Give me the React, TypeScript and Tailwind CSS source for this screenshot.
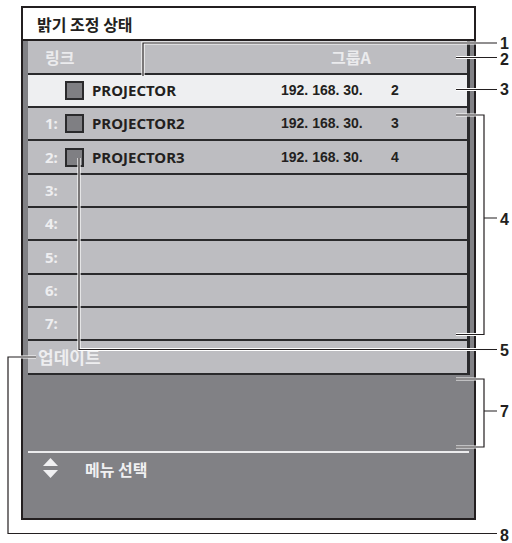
const KR = "font-['Noto_Sans_CJK_KR','Noto_Sans',sans-serif]";

type Row = {
  idx: string;
  name?: string;
  ip?: string;
  h: string;
  selected?: boolean;
};

const rows: Row[] = [
  { idx: '', name: 'PROJECTOR', ip: '2', h: 'h-[33px]', selected: true },
  { idx: '1:', name: 'PROJECTOR2', ip: '3', h: 'h-[33px]' },
  { idx: '2:', name: 'PROJECTOR3', ip: '4', h: 'h-[34px]' },
  { idx: '3:', h: 'h-[33px]' },
  { idx: '4:', h: 'h-[33px]' },
  { idx: '5:', h: 'h-[34px]' },
  { idx: '6:', h: 'h-[33px]' },
  { idx: '7:', h: 'h-[33px]' },
];

// callout leader lines, drawn over the screen
const leaders = [
  'M143 76V43H497',
  'M456 57.5H497',
  'M456 89.5H497',
  'M456 115H484V334.5H456M484 218H497',
  'M79 158V349.5H497',
  'M456 379H484V447H456M484 411H497',
  'M36 357H8V533.5H497',
];

const marks = [
  { n: '1', y: 43 },
  { n: '2', y: 59.5 },
  { n: '3', y: 89 },
  { n: '4', y: 219 },
  { n: '5', y: 350 },
  { n: '7', y: 411 },
  { n: '8', y: 535 },
];

function Callouts() {
  return (
    <svg className="absolute left-0 top-0 pointer-events-none" width="512" height="543" viewBox="0 0 512 543">
      {leaders.map((d) => (
        <path key={'w' + d} d={d} fill="none" stroke="#ffffff" strokeWidth="3.2" />
      ))}
      {leaders.map((d) => (
        <path key={'k' + d} d={d} fill="none" stroke="#231f20" strokeWidth="1.2" />
      ))}
      {marks.map((m) => (
        <text
          key={m.n}
          x="500"
          y={m.y}
          dominantBaseline="central"
          fontFamily="'Liberation Sans', Arial, sans-serif"
          fontWeight="700"
          fontSize="16"
          fill="#231f20"
        >
          {m.n}
        </text>
      ))}
    </svg>
  );
}

function ListRow({ row }: { row: Row }) {
  return (
    <div
      className={`${row.h} flex items-center border-b-2 border-r-[3px] border-[#2a2a2c] ${
        row.selected ? 'bg-[#eeeff1]' : 'bg-[#bdbdc1]'
      }`}
    >
      <div className="w-[37px] pl-[17px] text-[15px] font-bold text-[#eeeef0] font-['Noto_Sans',sans-serif]">{row.idx}</div>
      {row.name && (
        <>
          <div className="w-[19px] h-[19px] border-2 border-[#2a2a2c] bg-[#7f7f83]" />
          <div className="w-[197px] pl-[8px] text-[15px] font-bold text-[#231f20] font-['Noto_Sans',sans-serif]">
            {row.name}
          </div>
          <div className="flex text-[14px] font-bold text-[#231f20] font-['Liberation_Sans',Arial,sans-serif] whitespace-pre">
            <span>192. 168. 30.</span>
            <span className="w-[36px] text-right">{row.ip}</span>
          </div>
        </>
      )}
    </div>
  );
}

export default function App() {
  return (
    <div className="relative w-[512px] h-[543px] bg-white overflow-hidden">
      <div className="ml-[21px] pt-[6px] w-[455px]">
        {/* Title */}
        <div className="h-[35px] border-2 border-[#231f20] bg-white flex items-center pl-[14px]">
          <span className={`${KR} text-[16px] font-bold text-[#231f20]`}>밝기 조정 상태</span>
        </div>

        {/* Panel */}
        <div className="h-[479px] border-2 border-t-0 border-[#231f20] bg-[#818185] pl-[5px] pr-[4px]">
          {/* Header */}
          <div className={`h-[34px] flex items-center border-b-2 border-r-[3px] border-[#2a2a2c] bg-[#bdbdc1] ${KR} text-[16px] font-bold text-[#ebebed]`}>
            <div className="w-[303px] pl-[17px]">링크</div>
            <div>그룹A</div>
          </div>

          {rows.map((row) => (
            <ListRow key={row.idx + (row.name ?? '')} row={row} />
          ))}

          {/* Update */}
          <div className={`h-[34px] flex items-center border-b-2 border-r-[3px] border-[#2a2a2c] bg-[#bdbdc1] pl-[10px] ${KR} text-[17px] font-bold text-[#eeeef0]`}>
            업데이트
          </div>

          <div className="h-[76px]" />
          <div className="h-[2px] bg-[#ececee] mr-[1px]" />

          {/* Footer */}
          <div className="flex items-start pl-[15px] pt-[5px]">
            <svg width="15" height="20" viewBox="0 0 15 20">
              <path d="M7.5 0L15 8H0Z" fill="#f0f0f2" />
              <path d="M0 12H15L7.5 20Z" fill="#f0f0f2" />
            </svg>
            <span className={`${KR} ml-[27px] text-[16px] font-bold text-[#f0f0f2] leading-[22px]`}>메뉴 선택</span>
          </div>
        </div>
      </div>

      <Callouts />
    </div>
  );
}
